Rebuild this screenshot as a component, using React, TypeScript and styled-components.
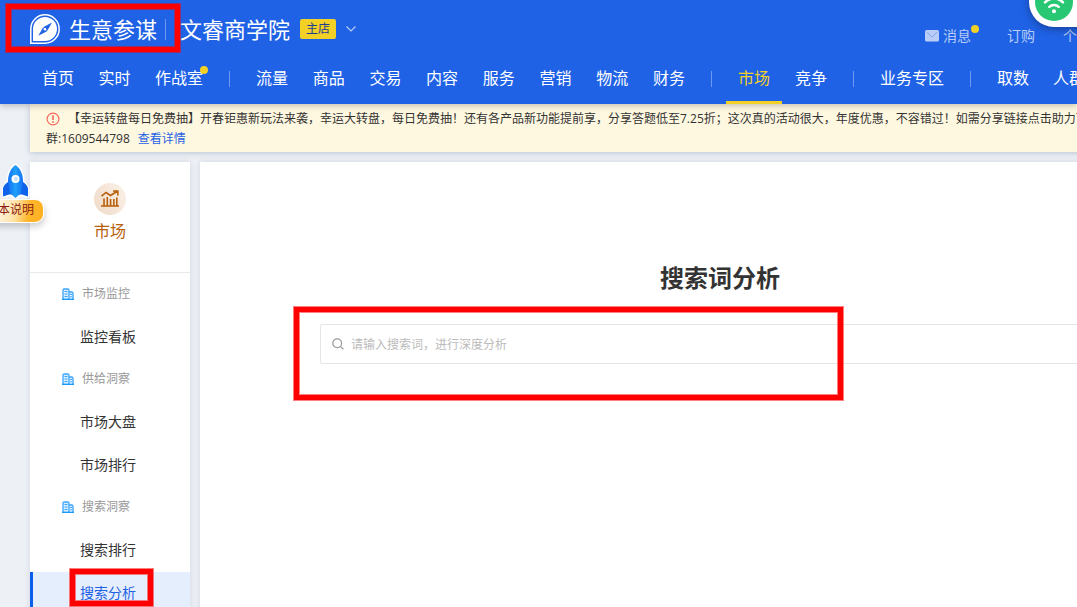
import React from 'react';
import styled, { createGlobalStyle } from 'styled-components';

const GlobalStyle = createGlobalStyle`
  * { box-sizing: border-box; }
  body {
    margin: 0;
    background: #edf0f5;
    color: #333;
    font: 12px/20px "Open Sans", "Noto Sans CJK SC", sans-serif;
  }
  a { color: inherit; text-decoration: none; }
  ul { margin: 0; padding: 0; list-style: none; }
  button { font: inherit; border: 0; background: none; padding: 0; cursor: pointer; }
  svg { display: block; flex: none; }
`;

const Page = styled.div`
  position: relative;
  display: flex;
  flex-direction: column;
  height: 100vh;
  overflow: hidden;
`;

const Header = styled.header`
  position: relative;
  z-index: 2;
  background: #1f62e6;
  color: #fff;
  box-shadow: 0 2px 6px rgba(0, 0, 0, 0.22);
`;

const Container = styled.div`
  min-width: 1270px;
  padding: 0 30px;
`;

const TopBar = styled(Container)`
  display: flex;
  align-items: center;
  height: 58px;
`;

const Brand = styled.a`
  display: flex;
  align-items: center;
  gap: 9px;
  font-size: 22px;
`;

const BrandDivider = styled.i`
  width: 1px;
  height: 21px;
  margin: 0 14px 0 8px;
  background: rgba(255, 255, 255, 0.35);
`;

const ShopButton = styled.button`
  display: flex;
  align-items: center;
  gap: 10px;
  color: #fff;
`;

const ShopName = styled.span`
  font-size: 22px;
`;

const ShopTag = styled.span`
  width: 36px;
  height: 20px;
  border-radius: 2px;
  background: #f3d025;
  color: #1c3f94;
  font-size: 12px;
  line-height: 20px;
  text-align: center;
`;

const TopLinks = styled.nav`
  display: flex;
  flex: 0 0 315px;
  gap: 28px;
  margin-left: auto;
  padding-top: 14px;
  font-size: 14px;
  color: #b9cdf7;
  white-space: nowrap;
`;

const TopLink = styled.a`
  position: relative;
  display: flex;
  align-items: center;
  gap: 4px;
`;

const MessageLink = styled(TopLink)`
  padding-right: 8px;
`;

const Dot = styled.i<{ $top: number; $right: number }>`
  position: absolute;
  top: ${(p) => p.$top}px;
  right: ${(p) => p.$right}px;
  width: 8px;
  height: 8px;
  border-radius: 50%;
  background: #f3d025;
`;

const MainNav = styled.nav`
  display: flex;
  align-items: center;
  min-width: 1270px;
  height: 46px;
  padding-left: 30px;
  white-space: nowrap;
`;

const NavGroup = styled.ul<{ $width?: number }>`
  display: flex;
  flex: none;
  justify-content: space-between;
  width: ${(p) => (p.$width ? `${p.$width}px` : 'auto')};
`;

const NavLink = styled.a<{ $active?: boolean }>`
  position: relative;
  display: block;
  height: 46px;
  padding: 0 12px;
  border-bottom: 3px solid ${(p) => (p.$active ? '#f3d025' : 'transparent')};
  color: ${(p) => (p.$active ? '#f3d025' : '#fff')};
  font-size: 16px;
  line-height: 40px;
`;

const NavDivider = styled.i`
  flex: none;
  width: 1px;
  height: 16px;
  margin: 0 14px 4px;
  background: rgba(255, 255, 255, 0.35);
`;

const Notice = styled.section`
  margin: 0 0 10px;
  padding: 5px 16px 3px;
  background: #fff8e1;
  box-shadow: 0 1px 6px rgba(40, 60, 100, 0.25);
  white-space: nowrap;
`;

const NoticeLine = styled.div`
  display: flex;
  align-items: center;
  gap: 8px;
`;

const DetailLink = styled.a`
  color: #1f62e6;
`;

const Columns = styled(Container)`
  display: flex;
  flex: 1;
  gap: 10px;
`;

const panelShadow = '0 0 6px rgba(40, 60, 100, 0.14)';

const Sidebar = styled.aside`
  flex: 0 0 160px;
  background: #fff;
  box-shadow: ${panelShadow};
`;

const SidebarHead = styled.div`
  display: flex;
  flex-direction: column;
  align-items: center;
  gap: 6px;
  height: 111px;
  padding-top: 21px;
  border-bottom: 1px solid #e8eaee;
  color: #b8600b;
  font-size: 16px;
`;

const SidebarIcon = styled.span`
  display: grid;
  place-items: center;
  width: 32px;
  height: 32px;
  border-radius: 50%;
  background: linear-gradient(60deg, #efdac7, #fbf1e8);
`;

const Menu = styled.nav`
  padding-top: 1px;
`;

const MenuHeading = styled.h2`
  display: flex;
  align-items: center;
  gap: 8px;
  height: 42px;
  margin: 0;
  padding: 0 0 2px 32px;
  color: #999;
  font-size: 12px;
  font-weight: 400;
`;

const MenuLink = styled.a<{ $active?: boolean }>`
  display: block;
  height: 43px;
  padding-left: 47px;
  border-left: 3px solid ${(p) => (p.$active ? '#0a60ea' : 'transparent')};
  background: ${(p) => (p.$active ? '#e5eefc' : 'transparent')};
  color: ${(p) => (p.$active ? '#1f62e6' : '#333')};
  font-size: 14px;
  line-height: 41px;
`;

const Main = styled.main`
  flex: 1;
  padding: 100px 120px;
  background: #fff;
  box-shadow: ${panelShadow};
`;

const Title = styled.h1`
  margin: 0 0 30px;
  font-size: 24px;
  line-height: 32px;
  font-weight: 700;
  text-align: center;
`;

const SearchBox = styled.label`
  display: flex;
  align-items: center;
  gap: 7px;
  height: 40px;
  padding: 0 11px;
  border: 1px solid #e5e5e5;
  border-radius: 2px;
`;

const SearchInput = styled.input`
  flex: 1;
  padding: 2px 0 0;
  border: 0;
  outline: 0;
  background: none;
  color: #333;
  font: inherit;
  &::placeholder { color: #bbb; opacity: 1; }
`;

const ConnectBadge = styled.div`
  position: absolute;
  z-index: 3;
  top: -23px;
  left: 1029px;
  width: 120px;
  height: 50px;
  padding: 6px;
  border-radius: 25px;
  background: #fff;
  box-shadow: 0 2px 8px rgba(0, 0, 0, 0.35);
`;

const VersionTip = styled.a`
  position: absolute;
  z-index: 3;
  top: 162px;
  left: -25px;
  width: 69px;
  color: #8c1b12;
`;

const RocketWrap = styled.span`
  display: block;
  margin-left: 26px;
`;

const VersionLabel = styled.span`
  display: block;
  height: 24px;
  padding: 0 8px 0 10px;
  border: 1px solid #fff;
  border-radius: 9px;
  background: linear-gradient(100deg, #fff3dc 35%, #ffe2a6 58%, #ffb62b 78%, #ffb020);
  box-shadow: 1px 4px 6px rgba(0, 0, 0, 0.18);
  white-space: nowrap;
`;

const Mark = styled.div<{ $x: number; $y: number; $w: number; $h: number }>`
  position: absolute;
  z-index: 4;
  left: ${(p) => p.$x}px;
  top: ${(p) => p.$y}px;
  width: ${(p) => p.$w}px;
  height: ${(p) => p.$h}px;
  border: 5px solid #f00;
  box-shadow: 0 0 0 1px rgba(255, 0, 0, 0.5), inset 0 0 0 1px rgba(255, 0, 0, 0.5);
  pointer-events: none;
`;

const LogoIcon = () => (
  <svg width="30" height="30" viewBox="0 0 30 30" aria-hidden="true">
    <path d="M0.8 29.2V15A14.2 14.2 0 1 1 15 29.2Z" fill="none" stroke="#fff" strokeWidth="1.5" />
    <path d="M3 27V15A12 12 0 1 1 15 27Z" fill="#fff" />
    <path d="M22 8.5 17 17.2 13.2 13.2Z" fill="#1f62e6" />
    <path d="M8.3 21.8 13 13.4 17 17.2Z" fill="#1f62e6" />
    <circle cx="15" cy="15.3" r="1.3" fill="#fff" />
  </svg>
);

const MailIcon = () => (
  <svg width="14" height="12" viewBox="0 0 14 12" aria-hidden="true">
    <rect width="14" height="11.5" rx="1.5" fill="#b9cdf7" />
    <path d="M2 2.2 7 7.2 12 2.2" fill="none" stroke="#7ea3f1" strokeWidth="1" />
  </svg>
);

const ChevronIcon = () => (
  <svg width="10" height="6" viewBox="0 0 10 6" aria-hidden="true">
    <path d="M0.5 0.5 5 5 9.5 0.5" fill="none" stroke="#b9cdf7" strokeWidth="1.2" />
  </svg>
);

const AlertIcon = () => (
  <svg width="14" height="14" viewBox="0 0 14 14" aria-hidden="true">
    <circle cx="7" cy="7" r="5.9" fill="none" stroke="#f9685a" strokeWidth="1.2" />
    <path d="M7 3.2V8" stroke="#f9685a" strokeWidth="1.6" />
    <circle cx="7" cy="10" r="0.9" fill="#f9685a" />
  </svg>
);

const BuildingIcon = () => (
  <svg width="12" height="12" viewBox="0 0 12 12" aria-hidden="true">
    <path d="M1 11V2L2 1H6L7 2V11M7 4H10L11 5V11" fill="#d9efff" stroke="#3ba4ff" strokeWidth="1.3" />
    <path d="M2.5 3.5H5.5M2.5 6H5.5M2.5 8.5H5.5M8 6.5H10M8 8.8H10" stroke="#3ba4ff" />
    <path d="M0 11.3H12" stroke="#189bff" strokeWidth="1.4" />
  </svg>
);

const MarketIcon = () => (
  <svg width="20" height="18" viewBox="0 0 20 18" fill="none" stroke="#b8600b" strokeWidth="1.6" aria-hidden="true">
    <path d="M1.5 6.2 6 2.5 10.5 5.5 17 1.5M13 1H17.800V5.500" />
    <path d="M1 16H19M4 16V8.500M7.300 16V7M10.600 16V9M13.900 16V9M16.800 16V7.500" />
  </svg>
);

const SearchIcon = () => (
  <svg width="12" height="12" viewBox="0 0 12 12" fill="none" stroke="#999" strokeWidth="1.2" aria-hidden="true">
    <circle cx="5.2" cy="5.2" r="4.4" />
    <path d="M8.4 8.4 11.4 11.2" />
  </svg>
);

const WifiIcon = () => (
  <svg width="38" height="38" viewBox="0 0 38 38" fill="none" aria-hidden="true">
    <circle cx="19" cy="19" r="19" fill="#27c774" />
    <g stroke="#fff" strokeWidth="2.4" strokeLinecap="round">
      <path d="M14.2 24A6.6 6.6 0 0 1 23.8 24" />
      <path d="M10 19.4A12.4 12.4 0 0 1 28 19.4" />
      <path d="M6.2 14.8A18 18 0 0 1 31.8 14.8" />
    </g>
    <circle cx="19" cy="28.3" r="2" fill="#fff" />
  </svg>
);

const RocketIcon = () => (
  <svg width="30" height="37" viewBox="0 0 30 37" aria-hidden="true">
    <defs>
      <linearGradient id="rocketBody" x1="0" x2="1" y1="0" y2="0">
        <stop offset="0" stopColor="#1371f2" />
        <stop offset="0.5" stopColor="#21a0fb" />
        <stop offset="1" stopColor="#1371f2" />
      </linearGradient>
    </defs>
    <path
      d="M14.5 3C10 6 7 12 7 20L2.500 26V34H6.500L9 32.500L12 35H17L20 32.500L22.500 34H27V26L22 20C22 12 19 6 14.5 3Z"
      fill="#fff"
      stroke="#fff"
      strokeWidth="3"
      strokeLinejoin="round"
    />
    <path d="M7.500 19.500C4 22 1.500 25 2 28V34.500L8 32.500H21L27 34.500V28C27.500 25 25 22 21.500 19.500Z" fill="#0f62ea" />
    <path d="M14.500 3C9 7 7 13 7 20L9 31L14.500 36L20 31L22 20C22 13 20 7 14.500 3Z" fill="url(#rocketBody)" />
    <circle cx="14.500" cy="17" r="4" fill="#fff" />
    <circle cx="15" cy="17" r="2" fill="#c5e0fb" />
  </svg>
);

type NavItem = { label: string; active?: boolean; dot?: boolean };

const navGroups: { width?: number; items: NavItem[] }[] = [
  { width: 185, items: [{ label: '首页' }, { label: '实时' }, { label: '作战室', dot: true }] },
  {
    width: 453,
    items: ['流量', '商品', '交易', '内容', '服务', '营销', '物流', '财务'].map((label) => ({ label })),
  },
  { width: 113, items: [{ label: '市场', active: true }, { label: '竞争' }] },
  { items: [{ label: '业务专区' }] },
  { items: [{ label: '取数' }, { label: '人群' }] },
];

const menu = [
  { heading: '市场监控', items: ['监控看板'] },
  { heading: '供给洞察', items: ['市场大盘', '市场排行'] },
  { heading: '搜索洞察', items: ['搜索排行', '搜索分析'] },
];

export default function App() {
  return (
    <Page>
      <GlobalStyle />
      <Header>
        <TopBar>
          <Brand href="#">
            <LogoIcon />
            生意参谋
          </Brand>
          <BrandDivider />
          <ShopButton type="button">
            <ShopName>文睿商学院</ShopName>
            <ShopTag>主店</ShopTag>
            <ChevronIcon />
          </ShopButton>
          <TopLinks>
            <MessageLink href="#">
              <MailIcon />
              消息
              <Dot $top={-1} $right={0} />
            </MessageLink>
            <TopLink href="#">订购</TopLink>
            <TopLink href="#">个人中心</TopLink>
          </TopLinks>
        </TopBar>
        <MainNav>
          {navGroups.map((group, index) => (
            <React.Fragment key={group.items[0].label}>
              {index > 0 && <NavDivider />}
              <NavGroup $width={group.width}>
                {group.items.map((item) => (
                  <li key={item.label}>
                    <NavLink href="#" $active={item.active}>
                      {item.label}
                      {item.dot && <Dot $top={8} $right={7} />}
                    </NavLink>
                  </li>
                ))}
              </NavGroup>
            </React.Fragment>
          ))}
        </MainNav>
      </Header>

      <Container>
        <Notice>
          <NoticeLine>
            <AlertIcon />
            <span>
              【幸运转盘每日免费抽】开春钜惠新玩法来袭，幸运大转盘，每日免费抽！还有各产品新功能提前享，分享答题低至7.25折；这次真的活动很大，年度优惠，不容错过！如需分享链接点击助力可
            </span>
          </NoticeLine>
          <NoticeLine>
            <span>群:1609544798</span>
            <DetailLink href="#">查看详情</DetailLink>
          </NoticeLine>
        </Notice>
      </Container>

      <Columns>
        <Sidebar>
          <SidebarHead>
            <SidebarIcon>
              <MarketIcon />
            </SidebarIcon>
            市场
          </SidebarHead>
          <Menu>
            {menu.map((section) => (
              <section key={section.heading}>
                <MenuHeading>
                  <BuildingIcon />
                  {section.heading}
                </MenuHeading>
                <ul>
                  {section.items.map((label) => (
                    <li key={label}>
                      <MenuLink href="#" $active={label === '搜索分析'}>
                        {label}
                      </MenuLink>
                    </li>
                  ))}
                </ul>
              </section>
            ))}
          </Menu>
        </Sidebar>
        <Main>
          <Title>搜索词分析</Title>
          <SearchBox>
            <SearchIcon />
            <SearchInput type="text" aria-label="搜索词" placeholder="请输入搜索词，进行深度分析" />
          </SearchBox>
        </Main>
      </Columns>

      <VersionTip href="#">
        <RocketWrap>
          <RocketIcon />
        </RocketWrap>
        <VersionLabel>版本说明</VersionLabel>
      </VersionTip>
      <ConnectBadge>
        <WifiIcon />
      </ConnectBadge>

      <Mark $x={6} $y={4} $w={174} $h={48} />
      <Mark $x={294} $y={307} $w={549} $h={93} />
      <Mark $x={70} $y={569} $w={83} $h={37} />
    </Page>
  );
}
